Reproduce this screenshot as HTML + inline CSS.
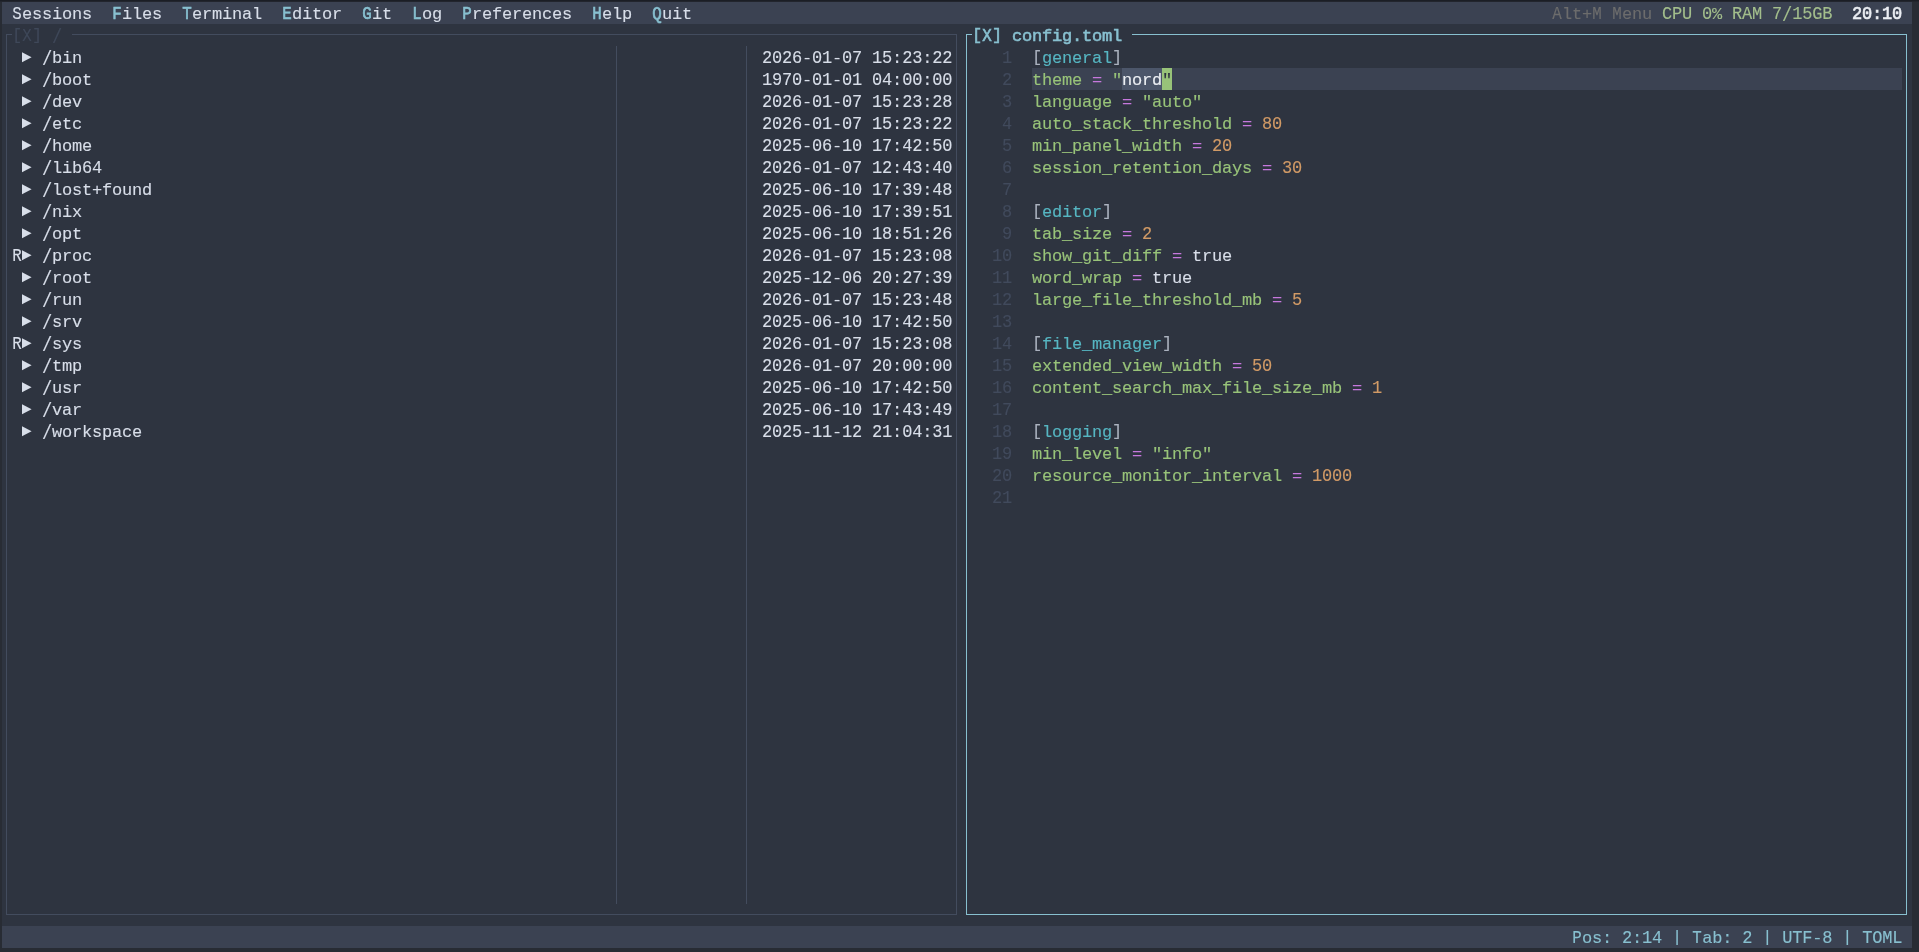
<!DOCTYPE html>
<html><head><meta charset="utf-8"><title>config.toml</title>
<style>
html,body{margin:0;padding:0;}
body{width:1919px;height:952px;overflow:hidden;background:#282c34;position:relative;
font-family:"Liberation Mono",monospace;-webkit-text-stroke:0.12px;}
.t{position:absolute;white-space:pre;font-size:17.0px;line-height:22px;height:22px;letter-spacing:-0.200px;
font-family:"Liberation Mono",monospace;-webkit-text-stroke:0.12px;}
.t span{display:inline-block;height:22px;vertical-align:top;}
.t b.c{transform:scale(0.93,1.085);transform-origin:50% 15.5px;}
.t i{display:inline-block;height:22px;vertical-align:top;font-style:normal;transform:translateY(-1.5px);}
.t u{display:inline-block;height:22px;vertical-align:top;text-decoration:none;transform:translateY(0.8px) scaleY(1.176);transform-origin:0 8.2px;}
.t b{display:inline-block;height:22px;vertical-align:top;font-weight:inherit;transform:scaleY(1.085);transform-origin:0 15.5px;}
.r{position:absolute;}
#bgl{position:absolute;left:0;top:0;width:1919px;height:952px;}
#txl{position:absolute;left:0;top:0;width:1919px;height:952px;will-change:transform;}
</style></head><body>
<div id="bgl">
<div class="r" style="left:2px;top:2px;width:1910px;height:946px;background:#2e3440"></div>
<div class="r" style="left:2px;top:2px;width:1910px;height:22px;background:#3b4252"></div>
<div class="r" style="left:2px;top:926px;width:1910px;height:22px;background:#3b4252"></div>
<div class="r" style="left:0px;top:0px;width:1919px;height:1px;background:#1b1e25"></div>
<div class="r" style="left:0px;top:1px;width:1919px;height:1px;background:#22252d"></div>
<div class="r" style="left:6px;top:34px;width:1px;height:881px;background:#434c5e"></div>
<div class="r" style="left:956px;top:34px;width:1px;height:881px;background:#434c5e"></div>
<div class="r" style="left:6px;top:914px;width:951px;height:1px;background:#434c5e"></div>
<div class="r" style="left:6px;top:34px;width:6px;height:1px;background:#434c5e"></div>
<div class="r" style="left:72px;top:34px;width:885px;height:1px;background:#434c5e"></div>
<div class="r" style="left:616px;top:46px;width:1px;height:858px;background:#434c5e"></div>
<div class="r" style="left:746px;top:46px;width:1px;height:858px;background:#434c5e"></div>
<svg class="r" style="left:22px;top:46px" width="10" height="22"><path d="M0 6.3 L9.6 11.3 L0 16.3Z" fill="#d8dee9"/></svg>
<svg class="r" style="left:22px;top:68px" width="10" height="22"><path d="M0 6.3 L9.6 11.3 L0 16.3Z" fill="#d8dee9"/></svg>
<svg class="r" style="left:22px;top:90px" width="10" height="22"><path d="M0 6.3 L9.6 11.3 L0 16.3Z" fill="#d8dee9"/></svg>
<svg class="r" style="left:22px;top:112px" width="10" height="22"><path d="M0 6.3 L9.6 11.3 L0 16.3Z" fill="#d8dee9"/></svg>
<svg class="r" style="left:22px;top:134px" width="10" height="22"><path d="M0 6.3 L9.6 11.3 L0 16.3Z" fill="#d8dee9"/></svg>
<svg class="r" style="left:22px;top:156px" width="10" height="22"><path d="M0 6.3 L9.6 11.3 L0 16.3Z" fill="#d8dee9"/></svg>
<svg class="r" style="left:22px;top:178px" width="10" height="22"><path d="M0 6.3 L9.6 11.3 L0 16.3Z" fill="#d8dee9"/></svg>
<svg class="r" style="left:22px;top:200px" width="10" height="22"><path d="M0 6.3 L9.6 11.3 L0 16.3Z" fill="#d8dee9"/></svg>
<svg class="r" style="left:22px;top:222px" width="10" height="22"><path d="M0 6.3 L9.6 11.3 L0 16.3Z" fill="#d8dee9"/></svg>
<svg class="r" style="left:22px;top:244px" width="10" height="22"><path d="M0 6.3 L9.6 11.3 L0 16.3Z" fill="#d8dee9"/></svg>
<svg class="r" style="left:22px;top:266px" width="10" height="22"><path d="M0 6.3 L9.6 11.3 L0 16.3Z" fill="#d8dee9"/></svg>
<svg class="r" style="left:22px;top:288px" width="10" height="22"><path d="M0 6.3 L9.6 11.3 L0 16.3Z" fill="#d8dee9"/></svg>
<svg class="r" style="left:22px;top:310px" width="10" height="22"><path d="M0 6.3 L9.6 11.3 L0 16.3Z" fill="#d8dee9"/></svg>
<svg class="r" style="left:22px;top:332px" width="10" height="22"><path d="M0 6.3 L9.6 11.3 L0 16.3Z" fill="#d8dee9"/></svg>
<svg class="r" style="left:22px;top:354px" width="10" height="22"><path d="M0 6.3 L9.6 11.3 L0 16.3Z" fill="#d8dee9"/></svg>
<svg class="r" style="left:22px;top:376px" width="10" height="22"><path d="M0 6.3 L9.6 11.3 L0 16.3Z" fill="#d8dee9"/></svg>
<svg class="r" style="left:22px;top:398px" width="10" height="22"><path d="M0 6.3 L9.6 11.3 L0 16.3Z" fill="#d8dee9"/></svg>
<svg class="r" style="left:22px;top:420px" width="10" height="22"><path d="M0 6.3 L9.6 11.3 L0 16.3Z" fill="#d8dee9"/></svg>
<div class="r" style="left:966px;top:34px;width:1px;height:881px;background:#88c0d0"></div>
<div class="r" style="left:1906px;top:34px;width:1px;height:881px;background:#88c0d0"></div>
<div class="r" style="left:966px;top:914px;width:941px;height:1px;background:#88c0d0"></div>
<div class="r" style="left:966px;top:34px;width:6px;height:1px;background:#88c0d0"></div>
<div class="r" style="left:1132px;top:34px;width:775px;height:1px;background:#88c0d0"></div>
<div class="r" style="left:1032px;top:68px;width:870px;height:22px;background:#3b4252"></div>
<div class="r" style="left:1122px;top:68px;width:40px;height:22px;background:#4c566a"></div>
<div class="r" style="left:1162px;top:68px;width:10px;height:22px;background:#98c379"></div>
</div>
<div id="txl">
<div class="t" style="left:12px;top:4px"><span style="color:#d8dee9;"><b class="c">S</b>essions</span></div>
<div class="t" style="left:112px;top:4px"><span style="color:#88c0d0;-webkit-text-stroke:0.6px;"><b class="c">F</b></span><span style="color:#d8dee9;">iles</span></div>
<div class="t" style="left:182px;top:4px"><span style="color:#88c0d0;-webkit-text-stroke:0.6px;"><b class="c">T</b></span><span style="color:#d8dee9;">erminal</span></div>
<div class="t" style="left:282px;top:4px"><span style="color:#88c0d0;-webkit-text-stroke:0.6px;"><b class="c">E</b></span><span style="color:#d8dee9;">ditor</span></div>
<div class="t" style="left:362px;top:4px"><span style="color:#88c0d0;-webkit-text-stroke:0.6px;"><b class="c">G</b></span><span style="color:#d8dee9;">it</span></div>
<div class="t" style="left:412px;top:4px"><span style="color:#88c0d0;-webkit-text-stroke:0.6px;"><b class="c">L</b></span><span style="color:#d8dee9;">og</span></div>
<div class="t" style="left:462px;top:4px"><span style="color:#88c0d0;-webkit-text-stroke:0.6px;"><b class="c">P</b></span><span style="color:#d8dee9;">references</span></div>
<div class="t" style="left:592px;top:4px"><span style="color:#88c0d0;-webkit-text-stroke:0.6px;"><b class="c">H</b></span><span style="color:#d8dee9;">elp</span></div>
<div class="t" style="left:652px;top:4px"><span style="color:#88c0d0;-webkit-text-stroke:0.6px;"><b class="c">Q</b></span><span style="color:#d8dee9;">uit</span></div>
<div class="t" style="left:1552px;top:4px"><span style="color:#6c6c6c;"><b class="c">A</b>lt+<b class="c">M</b> <b class="c">M</b>enu</span></div>
<div class="t" style="left:1662px;top:4px"><span style="color:#a3be8c;"><b>CPU</b> <b>0</b>% <b>RAM</b> <b>7</b><u>/</u><b>15GB</b></span></div>
<div class="t" style="left:1852px;top:4px"><span style="color:#eceff4;-webkit-text-stroke:0.6px;"><b>20</b>:<b>10</b></span></div>
<div class="t" style="left:12px;top:26px"><span style="color:#3f4859;"><i>[</i><b class="c">X</b><i>]</i> <u>/</u></span></div>
<div class="t" style="left:42px;top:48px"><span style="color:#d8dee9;"><u>/</u>bin</span></div>
<div class="t" style="left:762px;top:48px"><span style="color:#d8dee9;"><b>2026</b>-<b>01</b>-<b>07</b> <b>15</b>:<b>23</b>:<b>22</b></span></div>
<div class="t" style="left:42px;top:70px"><span style="color:#d8dee9;"><u>/</u>boot</span></div>
<div class="t" style="left:762px;top:70px"><span style="color:#d8dee9;"><b>1970</b>-<b>01</b>-<b>01</b> <b>04</b>:<b>00</b>:<b>00</b></span></div>
<div class="t" style="left:42px;top:92px"><span style="color:#d8dee9;"><u>/</u>dev</span></div>
<div class="t" style="left:762px;top:92px"><span style="color:#d8dee9;"><b>2026</b>-<b>01</b>-<b>07</b> <b>15</b>:<b>23</b>:<b>28</b></span></div>
<div class="t" style="left:42px;top:114px"><span style="color:#d8dee9;"><u>/</u>etc</span></div>
<div class="t" style="left:762px;top:114px"><span style="color:#d8dee9;"><b>2026</b>-<b>01</b>-<b>07</b> <b>15</b>:<b>23</b>:<b>22</b></span></div>
<div class="t" style="left:42px;top:136px"><span style="color:#d8dee9;"><u>/</u>home</span></div>
<div class="t" style="left:762px;top:136px"><span style="color:#d8dee9;"><b>2025</b>-<b>06</b>-<b>10</b> <b>17</b>:<b>42</b>:<b>50</b></span></div>
<div class="t" style="left:42px;top:158px"><span style="color:#d8dee9;"><u>/</u>lib<b>64</b></span></div>
<div class="t" style="left:762px;top:158px"><span style="color:#d8dee9;"><b>2026</b>-<b>01</b>-<b>07</b> <b>12</b>:<b>43</b>:<b>40</b></span></div>
<div class="t" style="left:42px;top:180px"><span style="color:#d8dee9;"><u>/</u>lost+found</span></div>
<div class="t" style="left:762px;top:180px"><span style="color:#d8dee9;"><b>2025</b>-<b>06</b>-<b>10</b> <b>17</b>:<b>39</b>:<b>48</b></span></div>
<div class="t" style="left:42px;top:202px"><span style="color:#d8dee9;"><u>/</u>nix</span></div>
<div class="t" style="left:762px;top:202px"><span style="color:#d8dee9;"><b>2025</b>-<b>06</b>-<b>10</b> <b>17</b>:<b>39</b>:<b>51</b></span></div>
<div class="t" style="left:42px;top:224px"><span style="color:#d8dee9;"><u>/</u>opt</span></div>
<div class="t" style="left:762px;top:224px"><span style="color:#d8dee9;"><b>2025</b>-<b>06</b>-<b>10</b> <b>18</b>:<b>51</b>:<b>26</b></span></div>
<div class="t" style="left:12px;top:246px"><span style="color:#d8dee9;"><b class="c">R</b></span></div>
<div class="t" style="left:42px;top:246px"><span style="color:#d8dee9;"><u>/</u>proc</span></div>
<div class="t" style="left:762px;top:246px"><span style="color:#d8dee9;"><b>2026</b>-<b>01</b>-<b>07</b> <b>15</b>:<b>23</b>:<b>08</b></span></div>
<div class="t" style="left:42px;top:268px"><span style="color:#d8dee9;"><u>/</u>root</span></div>
<div class="t" style="left:762px;top:268px"><span style="color:#d8dee9;"><b>2025</b>-<b>12</b>-<b>06</b> <b>20</b>:<b>27</b>:<b>39</b></span></div>
<div class="t" style="left:42px;top:290px"><span style="color:#d8dee9;"><u>/</u>run</span></div>
<div class="t" style="left:762px;top:290px"><span style="color:#d8dee9;"><b>2026</b>-<b>01</b>-<b>07</b> <b>15</b>:<b>23</b>:<b>48</b></span></div>
<div class="t" style="left:42px;top:312px"><span style="color:#d8dee9;"><u>/</u>srv</span></div>
<div class="t" style="left:762px;top:312px"><span style="color:#d8dee9;"><b>2025</b>-<b>06</b>-<b>10</b> <b>17</b>:<b>42</b>:<b>50</b></span></div>
<div class="t" style="left:12px;top:334px"><span style="color:#d8dee9;"><b class="c">R</b></span></div>
<div class="t" style="left:42px;top:334px"><span style="color:#d8dee9;"><u>/</u>sys</span></div>
<div class="t" style="left:762px;top:334px"><span style="color:#d8dee9;"><b>2026</b>-<b>01</b>-<b>07</b> <b>15</b>:<b>23</b>:<b>08</b></span></div>
<div class="t" style="left:42px;top:356px"><span style="color:#d8dee9;"><u>/</u>tmp</span></div>
<div class="t" style="left:762px;top:356px"><span style="color:#d8dee9;"><b>2026</b>-<b>01</b>-<b>07</b> <b>20</b>:<b>00</b>:<b>00</b></span></div>
<div class="t" style="left:42px;top:378px"><span style="color:#d8dee9;"><u>/</u>usr</span></div>
<div class="t" style="left:762px;top:378px"><span style="color:#d8dee9;"><b>2025</b>-<b>06</b>-<b>10</b> <b>17</b>:<b>42</b>:<b>50</b></span></div>
<div class="t" style="left:42px;top:400px"><span style="color:#d8dee9;"><u>/</u>var</span></div>
<div class="t" style="left:762px;top:400px"><span style="color:#d8dee9;"><b>2025</b>-<b>06</b>-<b>10</b> <b>17</b>:<b>43</b>:<b>49</b></span></div>
<div class="t" style="left:42px;top:422px"><span style="color:#d8dee9;"><u>/</u>workspace</span></div>
<div class="t" style="left:762px;top:422px"><span style="color:#d8dee9;"><b>2025</b>-<b>11</b>-<b>12</b> <b>21</b>:<b>04</b>:<b>31</b></span></div>
<div class="t" style="left:972px;top:26px"><span style="color:#88c0d0;-webkit-text-stroke:0.6px;"><i>[</i><b class="c">X</b><i>]</i> config.toml</span></div>
<div class="t" style="left:1002px;top:48px"><span style="color:#414a5c;"><b>1</b></span></div>
<div class="t" style="left:1032px;top:48px"><span style="color:#abb2bf;"><i>[</i></span><span style="color:#56b6c2;">general</span><span style="color:#abb2bf;"><i>]</i></span></div>
<div class="t" style="left:1002px;top:70px"><span style="color:#414a5c;"><b>2</b></span></div>
<div class="t" style="left:1032px;top:70px"><span style="color:#98c379;">theme</span><span style="color:#c678dd;"> = </span><span style="color:#98c379;">&quot;</span><span style="color:#eceff4;">nord</span><span style="color:#2e3440;">&quot;</span></div>
<div class="t" style="left:1002px;top:92px"><span style="color:#414a5c;"><b>3</b></span></div>
<div class="t" style="left:1032px;top:92px"><span style="color:#98c379;">language</span><span style="color:#c678dd;"> = </span><span style="color:#98c379;">&quot;</span><span style="color:#98c379;">auto</span><span style="color:#98c379;">&quot;</span></div>
<div class="t" style="left:1002px;top:114px"><span style="color:#414a5c;"><b>4</b></span></div>
<div class="t" style="left:1032px;top:114px"><span style="color:#98c379;">auto_stack_threshold</span><span style="color:#c678dd;"> = </span><span style="color:#d19a66;"><b>80</b></span></div>
<div class="t" style="left:1002px;top:136px"><span style="color:#414a5c;"><b>5</b></span></div>
<div class="t" style="left:1032px;top:136px"><span style="color:#98c379;">min_panel_width</span><span style="color:#c678dd;"> = </span><span style="color:#d19a66;"><b>20</b></span></div>
<div class="t" style="left:1002px;top:158px"><span style="color:#414a5c;"><b>6</b></span></div>
<div class="t" style="left:1032px;top:158px"><span style="color:#98c379;">session_retention_days</span><span style="color:#c678dd;"> = </span><span style="color:#d19a66;"><b>30</b></span></div>
<div class="t" style="left:1002px;top:180px"><span style="color:#414a5c;"><b>7</b></span></div>
<div class="t" style="left:1002px;top:202px"><span style="color:#414a5c;"><b>8</b></span></div>
<div class="t" style="left:1032px;top:202px"><span style="color:#abb2bf;"><i>[</i></span><span style="color:#56b6c2;">editor</span><span style="color:#abb2bf;"><i>]</i></span></div>
<div class="t" style="left:1002px;top:224px"><span style="color:#414a5c;"><b>9</b></span></div>
<div class="t" style="left:1032px;top:224px"><span style="color:#98c379;">tab_size</span><span style="color:#c678dd;"> = </span><span style="color:#d19a66;"><b>2</b></span></div>
<div class="t" style="left:992px;top:246px"><span style="color:#414a5c;"><b>10</b></span></div>
<div class="t" style="left:1032px;top:246px"><span style="color:#98c379;">show_git_diff</span><span style="color:#c678dd;"> = </span><span style="color:#d8dee9;">true</span></div>
<div class="t" style="left:992px;top:268px"><span style="color:#414a5c;"><b>11</b></span></div>
<div class="t" style="left:1032px;top:268px"><span style="color:#98c379;">word_wrap</span><span style="color:#c678dd;"> = </span><span style="color:#d8dee9;">true</span></div>
<div class="t" style="left:992px;top:290px"><span style="color:#414a5c;"><b>12</b></span></div>
<div class="t" style="left:1032px;top:290px"><span style="color:#98c379;">large_file_threshold_mb</span><span style="color:#c678dd;"> = </span><span style="color:#d19a66;"><b>5</b></span></div>
<div class="t" style="left:992px;top:312px"><span style="color:#414a5c;"><b>13</b></span></div>
<div class="t" style="left:992px;top:334px"><span style="color:#414a5c;"><b>14</b></span></div>
<div class="t" style="left:1032px;top:334px"><span style="color:#abb2bf;"><i>[</i></span><span style="color:#56b6c2;">file_manager</span><span style="color:#abb2bf;"><i>]</i></span></div>
<div class="t" style="left:992px;top:356px"><span style="color:#414a5c;"><b>15</b></span></div>
<div class="t" style="left:1032px;top:356px"><span style="color:#98c379;">extended_view_width</span><span style="color:#c678dd;"> = </span><span style="color:#d19a66;"><b>50</b></span></div>
<div class="t" style="left:992px;top:378px"><span style="color:#414a5c;"><b>16</b></span></div>
<div class="t" style="left:1032px;top:378px"><span style="color:#98c379;">content_search_max_file_size_mb</span><span style="color:#c678dd;"> = </span><span style="color:#d19a66;"><b>1</b></span></div>
<div class="t" style="left:992px;top:400px"><span style="color:#414a5c;"><b>17</b></span></div>
<div class="t" style="left:992px;top:422px"><span style="color:#414a5c;"><b>18</b></span></div>
<div class="t" style="left:1032px;top:422px"><span style="color:#abb2bf;"><i>[</i></span><span style="color:#56b6c2;">logging</span><span style="color:#abb2bf;"><i>]</i></span></div>
<div class="t" style="left:992px;top:444px"><span style="color:#414a5c;"><b>19</b></span></div>
<div class="t" style="left:1032px;top:444px"><span style="color:#98c379;">min_level</span><span style="color:#c678dd;"> = </span><span style="color:#98c379;">&quot;</span><span style="color:#98c379;">info</span><span style="color:#98c379;">&quot;</span></div>
<div class="t" style="left:992px;top:466px"><span style="color:#414a5c;"><b>20</b></span></div>
<div class="t" style="left:1032px;top:466px"><span style="color:#98c379;">resource_monitor_interval</span><span style="color:#c678dd;"> = </span><span style="color:#d19a66;"><b>1000</b></span></div>
<div class="t" style="left:992px;top:488px"><span style="color:#414a5c;"><b>21</b></span></div>
<div class="t" style="left:1572px;top:928px"><span style="color:#88c0d0;"><b class="c">P</b>os: <b>2</b>:<b>14</b> <i>|</i> <b class="c">T</b>ab: <b>2</b> <i>|</i> <b>UTF</b>-<b>8</b> <i>|</i> <b>TOML</b></span></div>
</div>
</body></html>
